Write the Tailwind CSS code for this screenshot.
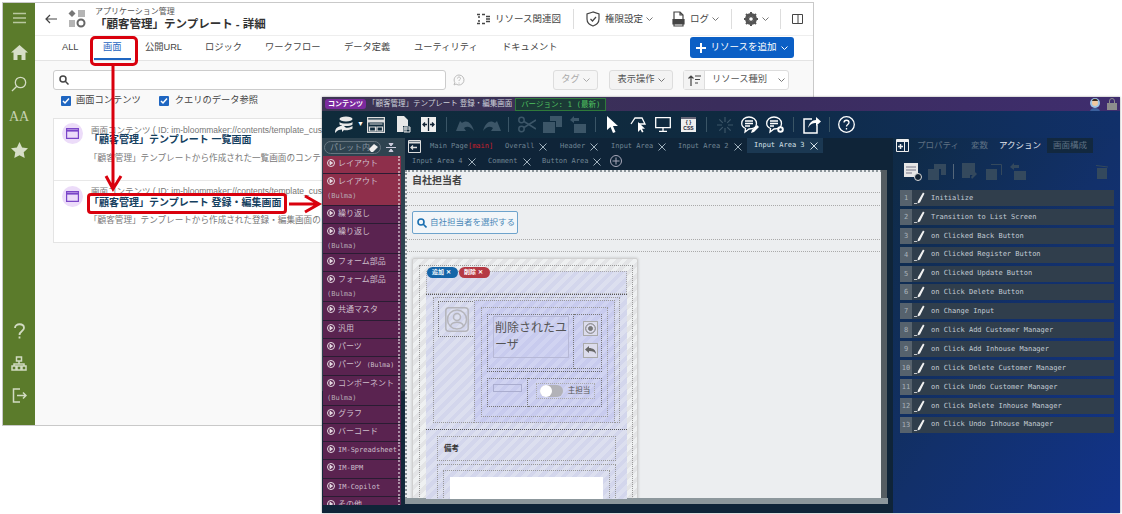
<!DOCTYPE html>
<html lang="en">
<head>
<meta charset="UTF-8">
<title>顧客管理 テンプレート</title>
<script src="https://cdn.jsdelivr.net/npm/@tailwindcss/browser@4"></script>
</head>
<body class="bg-white w-[1122px] h-[514px] overflow-hidden relative font-['Liberation_Sans','Noto_Sans_CJK_JP',sans-serif]">

<!-- back window: resource detail -->
<div class="absolute left-[2px] top-[2px] w-[812px] h-[424px] border border-[#c9c9c9] bg-[#f9f9f9] flex overflow-hidden">
  <div class="w-[32px] bg-[#5b7b2b] flex flex-col items-center shrink-0">
    <svg class="mt-[9px]" width="15" height="12" viewBox="0 0 15 12" stroke="#b9c8a0" stroke-width="1.3"><path d="M1 1.5h13M1 6h13M1 10.5h13"/></svg>
    <svg class="mt-[21px]" width="17" height="15" viewBox="0 0 17 15" fill="#d7dfc8"><path d="M8.5 0 0 7.5h2.5V15h4v-5h4v5h4V7.5H17z"/></svg>
    <svg class="mt-[16px]" width="16" height="16" viewBox="0 0 16 16" fill="none" stroke="#d2dbc2" stroke-width="1.3"><circle cx="9.5" cy="6.5" r="5.2"/><path d="M5.8 10.2 1 15"/></svg>
    <span class="mt-[17px] text-[14px] leading-[16px] text-[#c6d2b2] font-['Liberation_Serif',serif]">AA</span>
    <svg class="mt-[17px]" width="17" height="16" viewBox="0 0 17 16" fill="#d7dfc8"><path d="m8.5 0 2.6 5.4 5.9.8-4.3 4.1 1 5.7-5.2-2.8L3.3 16l1-5.7L0 6.2l5.9-.8z"/></svg>
    <svg class="mt-[165px]" width="11" height="16" viewBox="0 0 11 16" fill="none" stroke="#d2dbc2" stroke-width="1.8"><path d="M1 5c0-5 9-5 9 0 0 3-4.500 3-4.500 7M5.500 13.500v2"/></svg>
    <svg class="mt-[17px]" width="16" height="15" viewBox="0 0 16 15" fill="none" stroke="#d2dbc2" stroke-width="1.500"><path d="M5.500 1h5v4h-5zM1 10h4v4H1zM6 10h4v4H6zM11 10h4v4h-4zM8 5v3M3 10V8h10v2"/></svg>
    <svg class="mt-[17px]" width="15" height="15" viewBox="0 0 15 15" fill="none" stroke="#d2dbc2" stroke-width="1.500"><path d="M8 1H1.500v13H8M5 7.500h9M11 4.500l3 3-3 3"/></svg>
  </div>
  <div class="flex-1 min-w-0 flex flex-col">
    <div class="h-[33px] bg-white flex items-center shrink-0 border-b border-[#eee] text-[#444]">
      <svg class="ml-[10px]" width="12" height="10" viewBox="0 0 12 10" fill="none" stroke="#444" stroke-width="1.200"><path d="M12 5H1M5 1 1 5l4 4"/></svg>
      <svg class="ml-[11px]" width="18" height="18" viewBox="0 0 18 18"><path d="m4 0 3.500 3.500L4 7 .5 3.500z" fill="#777"/><path d="M10 0h7v7h-7zM1 10h6v7H1z" fill="#b5b5b5"/><circle cx="13" cy="13" r="3.500" fill="none" stroke="#666" stroke-width="2"/></svg>
      <div class="ml-[9px] flex flex-col">
        <span class="text-[8px] leading-[10px] text-[#555]">アプリケーション管理</span>
        <span class="text-[11.500px] leading-[15px] font-semibold text-[#333]">「顧客管理」テンプレート - 詳細</span>
      </div>
      <div class="ml-auto flex items-center text-[9.500px] text-[#444]">
        <svg width="13" height="12" viewBox="0 0 13 12" fill="none" stroke="#444" stroke-width="1.500"><path d="M0 1.500h3M5 1.500h3M9 3.500h4M9 6h4M9 8.500h4M0 10.500h3M5 10.500h3M2 3v2M2 7v2"/></svg>
        <span class="ml-[5px]">リソース関連図</span>
        <span class="ml-[12px] w-px h-[20px] bg-[#ddd]"></span>
        <svg class="ml-[12px]" width="14" height="16" viewBox="0 0 14 16" fill="none" stroke="#444" stroke-width="1.200"><path d="M7 1 1 3v5c0 3.500 3 6 6 7 3-1 6-3.500 6-7V3zM4.500 8l2 2 3.500-4"/></svg>
        <span class="ml-[5px]">権限設定</span>
        <svg class="ml-[3px]" width="7" height="4" viewBox="0 0 7 4" fill="none" stroke="#777"><path d="m.5.5 3 3 3-3"/></svg>
        <svg class="ml-[19px]" width="13" height="16" viewBox="0 0 13 16" fill="none" stroke="#444" stroke-width="1.200"><path d="M8 1H2v14h9V4zM8 1v3h3"/><path d="M1 8.500h11v4.500H1z" fill="#444"/></svg>
        <span class="ml-[5px]">ログ</span>
        <svg class="ml-[3px]" width="7" height="4" viewBox="0 0 7 4" fill="none" stroke="#777"><path d="m.5.5 3 3 3-3"/></svg>
        <span class="ml-[12px] w-px h-[20px] bg-[#ddd]"></span>
        <svg class="ml-[12px]" width="14" height="14" viewBox="0 0 14 14"><circle cx="7" cy="7" r="4.500" fill="none" stroke="#555" stroke-width="3"/><path d="M7 0v14M0 7h14M2 2l10 10M12 2 2 12" stroke="#555" stroke-width="2"/><circle cx="7" cy="7" r="1.800" fill="#fff"/></svg>
        <svg class="ml-[4px]" width="7" height="4" viewBox="0 0 7 4" fill="none" stroke="#777"><path d="m.5.5 3 3 3-3"/></svg>
        <span class="ml-[11px] w-px h-[20px] bg-[#ddd]"></span>
        <svg class="ml-[11px] mr-[10px]" width="11" height="10" viewBox="0 0 11 10" fill="none" stroke="#444"><path d="M.5.5h10v9H.5zM6 .5v9"/></svg>
      </div>
    </div>
    <div class="h-[25px] bg-white flex items-center relative shrink-0 border-b border-[#e4e4e4] text-[9.250px] text-[#444]">
      <span class="absolute left-[27px]">ALL</span>
      <span class="absolute left-[68px] text-[#1f66c1]">画面</span>
      <span class="absolute left-[59px] bottom-0 w-[37px] h-[2px] bg-[#1f66c1]"></span>
      <span class="absolute left-[110px]">公開URL</span>
      <span class="absolute left-[170px]">ロジック</span>
      <span class="absolute left-[230px]">ワークフロー</span>
      <span class="absolute left-[309px]">データ定義</span>
      <span class="absolute left-[379px]">ユーティリティ</span>
      <span class="absolute left-[467px]">ドキュメント</span>
      <button class="absolute left-[655px] top-[1px] w-[104px] h-[21px] rounded-[3px] bg-[#0b5fc5] text-white text-[9.500px] flex items-center justify-center gap-[4px]">
        <svg width="10" height="10" viewBox="0 0 10 10" stroke="#fff" stroke-width="2"><path d="M5 0v10M0 5h10"/></svg>
        <span>リソースを追加</span>
        <svg width="7" height="4" viewBox="0 0 7 4" fill="none" stroke="#fff"><path d="m.5.5 3 3 3-3"/></svg>
      </button>
    </div>
    <div class="flex items-center mt-[9px] ml-[18px] h-[20px] shrink-0 text-[9.250px] text-[#555]">
      <div class="w-[393px] h-[20px] bg-white border border-[#ccc] rounded-[3px] flex items-center pl-[5px]">
        <svg width="10" height="10" viewBox="0 0 10 10" fill="none" stroke="#444" stroke-width="1.500"><circle cx="4" cy="4" r="3"/><path d="m6.300 6.300 3.200 3.200"/></svg>
      </div>
      <svg class="ml-[7px]" width="12" height="12" viewBox="0 0 12 12" fill="none" stroke="#bbb"><path d="M6 1a5 5 0 1 1-3 9l-2 1 .8-2.500A5 5 0 0 1 6 1z"/><path d="M4.500 4.500c0-2 3-2 3 0 0 1-1.500 1-1.500 2.500M6 8.500v1"/></svg>
      <span class="ml-[88px] w-[45px] h-[20px] border border-[#ddd] rounded-[3px] flex items-center justify-center gap-[3px] text-[#aaa] bg-[#f6f6f6]">タグ <svg width="7" height="4" viewBox="0 0 7 4" fill="none" stroke="#aaa"><path d="m.5.5 3 3 3-3"/></svg></span>
      <span class="ml-[11px] w-[64px] h-[20px] border border-[#ddd] rounded-[3px] flex items-center justify-center gap-[3px] bg-[#f3f3f3]">表示操作 <svg width="7" height="4" viewBox="0 0 7 4" fill="none" stroke="#777"><path d="m.5.5 3 3 3-3"/></svg></span>
      <div class="ml-[10px] w-[106px] h-[20px] border border-[#ddd] rounded-[3px] flex items-center bg-white">
        <span class="w-[21px] h-full border-r border-[#ddd] flex items-center justify-center bg-[#f3f3f3]">
          <svg width="13" height="11" viewBox="0 0 13 11" fill="none" stroke="#444" stroke-width="1.200"><path d="M3 11V1M.5 3.500 3 1l2.500 2.500M7 1h6M7 4.500h5M7 8h3"/></svg>
        </span>
        <span class="ml-[7px]">リソース種別</span>
        <svg class="ml-[11px]" width="7" height="4" viewBox="0 0 7 4" fill="none" stroke="#777"><path d="m.5.5 3 3 3-3"/></svg>
      </div>
    </div>
    <div class="flex items-center mt-[5px] ml-[26px] h-[12px] text-[9.250px] text-[#444] shrink-0">
      <span class="w-[10px] h-[10px] bg-[#1f66c1] rounded-[1px] flex items-center justify-center"><svg width="8" height="8" viewBox="0 0 8 8" fill="none" stroke="#fff" stroke-width="1.500"><path d="m1 4 2 2 4-4.500"/></svg></span>
      <span class="ml-[5px]">画面コンテンツ</span>
      <span class="ml-[18px] w-[10px] h-[10px] bg-[#1f66c1] rounded-[1px] flex items-center justify-center"><svg width="8" height="8" viewBox="0 0 8 8" fill="none" stroke="#fff" stroke-width="1.500"><path d="m1 4 2 2 4-4.500"/></svg></span>
      <span class="ml-[6px]">クエリのデータ参照</span>
    </div>
    <div class="mt-[11px] ml-[18px] w-[750px] h-[125px] border border-[#e4e4e4] bg-white flex flex-col shrink-0">
      <div class="h-[62px] border-b border-[#e8e8e8] flex pl-[8px] pt-[4px]">
        <span class="w-[21px] h-[21px] rounded-full bg-[#ecdcf9] flex items-center justify-center shrink-0"><svg width="13" height="11" viewBox="0 0 13 11" fill="none" stroke="#7a45c8" stroke-width="1.200"><path d="M.6.6h11.800v9.800H.6z"/><path d="M.6 2.600h11.800" stroke-width="2"/></svg></span>
        <div class="ml-[8px] whitespace-nowrap flex flex-col items-start">
          <span class="text-[8.500px] leading-[10px] mt-[2px] text-[#777]">画面コンテンツ ( ID: im-bloommaker://contents/template_custome</span>
          <span class="-ml-[2px] text-[10px] leading-[12px] mt-[-1px] font-bold text-[#15405f]">「顧客管理」テンプレート 一覧画面</span>
          <span class="-ml-[2px] text-[8.600px] leading-[12px] mt-[6px] text-[#777]">「顧客管理」テンプレートから作成された一覧画面のコンテ</span>
        </div>
      </div>
      <div class="flex-1 flex pl-[8px] pt-[5px]">
        <span class="w-[21px] h-[21px] rounded-full bg-[#ecdcf9] flex items-center justify-center shrink-0"><svg width="13" height="11" viewBox="0 0 13 11" fill="none" stroke="#7a45c8" stroke-width="1.200"><path d="M.6.6h11.800v9.800H.6z"/><path d="M.6 2.600h11.800" stroke-width="2"/></svg></span>
        <div class="ml-[8px] whitespace-nowrap flex flex-col items-start">
          <span class="text-[8.500px] leading-[10px] text-[#777]">画面コンテンツ ( ID: im-bloommaker://contents/template_custome</span>
          <span class="-ml-[2px] text-[10px] leading-[12px] mt-[1px] font-bold text-[#15405f]">「顧客管理」テンプレート 登録・編集画面</span>
          <span class="-ml-[2px] text-[8.600px] leading-[12px] mt-[5px] text-[#777]">「顧客管理」テンプレートから作成された登録・編集画面の</span>
        </div>
      </div>
    </div>
  </div>
</div>

<!-- callouts over the back window -->
<span class="absolute left-[90px] top-[36px] w-[48px] h-[30px] border-[3px] border-[#d9000d] rounded-[5px]"></span>
<span class="absolute left-[87px] top-[193px] w-[200px] h-[21px] border-[3px] border-[#d9000d] rounded-[4px]"></span>
<svg class="absolute left-0 top-0" width="330" height="230" fill="none" stroke="#d9000d" stroke-width="3">
  <path d="M113 66v122M106 176l7 13 8-13"/>
  <path d="M289 204h30M305 196l14 8-14 8"/>
</svg>

<!-- front window: page editor -->
<div class="absolute left-[322px] top-[97px] w-[798px] h-[416px] bg-[#0f2438] flex flex-col overflow-hidden shadow-[0_0_2px_#0006]">
  <div class="h-[14px] shrink-0 flex items-center bg-linear-to-r from-[#3c3552] via-[#3a2d5c] to-[#3f2d6e] text-[7.500px]">
    <span class="ml-[3px] px-[3px] h-[10px] leading-[10px] rounded-[3px] bg-[#7b2a9e] text-white text-[7px] font-bold whitespace-nowrap">コンテンツ</span>
    <span class="ml-[2px] text-[#ccd0d8] whitespace-nowrap">「顧客管理」テンプレート 登録・編集画面</span>
    <span class="ml-[3px] w-[91px] h-[13px] border border-[#2f7a3a] bg-[#1b3a36] text-[#4fc060] text-[7.500px] leading-[11px] text-center font-['DejaVu_Sans_Mono','Noto_Sans_CJK_JP',monospace] whitespace-nowrap">バージョン: 1 (最新)</span>
    <svg class="ml-auto" width="12" height="13" viewBox="0 0 12 13"><circle cx="6" cy="5" r="5" fill="#9cc3e6"/><circle cx="6" cy="5" r="3" fill="#f0c8a0"/><path d="M3 3c1-3 5-3 6 0z" fill="#3a2a1a"/><path d="M1 13c1-4 9-4 10 0z" fill="#3b5f9c"/></svg>
    <svg class="ml-[6px] mr-[3px]" width="10" height="12" viewBox="0 0 10 12"><path d="M2.500 5V3a2.500 2.500 0 0 1 5 0v2" fill="none" stroke="#8d8d8d"/><rect y="5" width="10" height="7" fill="#8d8d8d"/></svg>
  </div>
  <div class="h-[27px] shrink-0 flex items-center bg-linear-to-r from-[#0f2b3b] via-[#0f2a40] to-[#11306a]">
    <svg class="ml-[13px]" width="18" height="18" viewBox="0 0 18 18" fill="#e8e8e8"><ellipse cx="11" cy="3" rx="6.500" ry="2.500"/><path d="M4.500 6c2 2 11 2 13 0v2.500c-2 2-11 2-13 0zM7 11.500c3 .5 8 .5 10.500-1.500v2.500c-1.500 1.200-5 2-8 1.800z"/><path d="M0 17c0-5 3-7 7-7V8l4 4-4 4v-2.500c-3 0-5 1-7 3.500z" fill="#f0f0f0"/></svg>
    <span class="ml-[4px] text-white text-[7px]">▼</span>
    <svg class="ml-[3px]" width="18" height="16" viewBox="0 0 18 16" fill="none" stroke="#ddd" stroke-width="1.200"><path d="M.6.6h16.800v14.800H.6z"/><path d="M.6 4h16.800" stroke-width="3"/><path d="M2.500 7h13M2.500 10h6v4h-6zM10 10h5.500v4H10z"/></svg>
    <svg class="ml-[11px]" width="15" height="18" viewBox="0 0 15 18" fill="#e8e8e8"><path d="M1 0h7l4 4v6H7v6H1z"/><path d="M8 11h6v5H8z" fill="none" stroke="#e8e8e8"/><path d="M8 13h6M10 11v5" stroke="#e8e8e8"/></svg>
    <svg class="ml-[10px]" width="15" height="15" viewBox="0 0 15 15"><rect width="15" height="15" fill="#eee"/><path d="M7.500 1v13M2 7.500h4M4 5.500l-2 2 2 2M13 7.500H9M11 5.500l2 2-2 2" fill="none" stroke="#123" stroke-width="1.300"/></svg>
    <span class="ml-[10px] w-px h-[15px] bg-[#3a5566]"></span>
    <svg class="ml-[9px]" width="18" height="12" viewBox="0 0 18 12" fill="#3c5668"><path d="M0 12 4 2l2 2c4-3 9-2 12 8-4-5-7-5-10-3l2 3z"/></svg>
    <svg class="ml-[9px]" width="18" height="12" viewBox="0 0 18 12" fill="#3c5668"><path d="m18 12-4-10-2 2C8 1 3 2 0 12c4-5 7-5 10-3l-2 3z"/></svg>
    <span class="ml-[7px] w-px h-[15px] bg-[#3a5566]"></span>
    <svg class="ml-[9px]" width="18" height="17" viewBox="0 0 18 17" fill="none" stroke="#3c5668" stroke-width="1.500"><circle cx="3.500" cy="4" r="2.700"/><circle cx="3.500" cy="13" r="2.700"/><path d="M6 5.500 18 13M6 11.500 18 4"/></svg>
    <svg class="ml-[7px]" width="19" height="17" viewBox="0 0 19 17" fill="#3c5668"><path d="M7 0h12v11H13V5H7z"/><path d="M0 6h12v11H0z"/></svg>
    <svg class="ml-[8px]" width="16" height="17" viewBox="0 0 16 17" fill="#3c5668"><path d="M0 4 4 0v2h5v3H4v2zM4 8h12v9H4z"/></svg>
    <span class="ml-[9px] w-px h-[15px] bg-[#3a5566]"></span>
    <svg class="ml-[10px]" width="14" height="17" viewBox="0 0 14 17" fill="#fff"><path d="M1 0v14l3.500-3 2.500 6 2.500-1-2.500-6H12z"/></svg>
    <svg class="ml-[10px]" width="17" height="16" viewBox="0 0 17 16" fill="none" stroke="#fff" stroke-width="1.300"><path d="M1 7 5 1h7l3 6H8"/><path d="M8 5v10l2.500-2.500 1.500 3 1.500-.7-1.500-3H15z" fill="#fff" stroke="none"/></svg>
    <svg class="ml-[8px]" width="16" height="15" viewBox="0 0 16 15" fill="none" stroke="#fff" stroke-width="1.300"><path d="M.7.7h14.600v10H.7zM8 11v3M4 14.300h8"/></svg>
    <span class="ml-[10px] w-[15px] h-[15px] bg-[#eee] text-[#223] text-[5px] leading-[6px] font-bold text-center border-t-2 border-[#667] whitespace-pre-line">{ }
CSS</span>
    <span class="ml-[10px] w-px h-[15px] bg-[#3a5566]"></span>
    <svg class="ml-[10px]" width="16" height="16" viewBox="0 0 16 16" stroke="#3c5668" stroke-width="1.200"><path d="M8 0v5M8 11v5M0 8h5M11 8h5M2.300 2.300l3.500 3.500M10.200 10.200l3.500 3.500M13.700 2.300l-3.500 3.500M5.800 10.200l-3.500 3.500"/></svg>
    <svg class="ml-[8px]" width="18" height="18" viewBox="0 0 18 18" fill="none" stroke="#fff" stroke-width="1.300"><path d="M8 1c4 0 7.500 2.500 7.500 6.500S12 13 8 13l-4 3 .5-3.500C2 11.500.7 9.500.7 7.500.7 3.500 4 1 8 1zM4 5h8M4 7.500h8M4 10h5"/><path d="m10 17 1-3 5-5 2 2-5 5z" fill="#fff" stroke="none"/></svg>
    <svg class="ml-[7px]" width="19" height="18" viewBox="0 0 19 18" fill="none" stroke="#fff" stroke-width="1.300"><path d="M8 1c4 0 7.500 2.500 7.500 6.500S12 13 8 13l-4 3 .5-3.500C2 11.500.7 9.500.7 7.500.7 3.500 4 1 8 1zM4 5h8M4 7.500h8M4 10h4"/><circle cx="14.500" cy="13.500" r="2.300" stroke-width="2"/></svg>
    <span class="ml-[8px] w-px h-[15px] bg-[#3a5566]"></span>
    <svg class="ml-[9px]" width="18" height="18" viewBox="0 0 18 18" fill="none" stroke="#fff" stroke-width="1.500"><path d="M9 3H1v14h13V9"/><path d="M5 12c1-5 4-8 8-8V1l5 4.500-5 4.500V7c-3 0-6 1-8 5z" fill="#fff" stroke="none"/></svg>
    <span class="ml-[8px] w-px h-[15px] bg-[#3a5566]"></span>
    <svg class="ml-[8px]" width="17" height="17" viewBox="0 0 17 17" fill="none" stroke="#fff" stroke-width="1.300"><circle cx="8.500" cy="8.500" r="7.800"/><path d="M6 6.500c0-3 5-3 5 0 0 2-2.500 2-2.500 4M8.500 12v1.500"/></svg>
  </div>
  <div class="flex-1 min-h-0 flex">
    <!-- palette -->
    <div class="w-[83px] shrink-0 flex flex-col overflow-hidden">
      <div class="h-[18px] shrink-0 flex items-center bg-[#2e4350]">
        <span class="ml-[2px] w-[57px] h-[13px] border border-[#66757f] rounded-full text-[8px] leading-[11px] pl-[5px] text-[#8796a0] relative whitespace-nowrap overflow-hidden">パレット内<svg class="absolute right-[2px] top-[2px]" width="9" height="8" viewBox="0 0 9 8" fill="#eee"><path d="M0 5 5 0l4 3-5 5H2z"/></svg></span>
        <svg class="ml-[5px]" width="10" height="11" viewBox="0 0 10 11" stroke="#ccd" fill="#ccd"><path d="M0 5.500h10"/><path d="M5 4 3 1.500h4zM5 7 3 9.500h4z"/></svg>
      </div>
      <div class="h-[349px] shrink-0 overflow-hidden bg-[linear-gradient(#2e4350_0,#2e4350_235px,#14283a_235px)]">
        <div id="palette" class="w-[78px] ml-px flex flex-col"></div>
      </div>
    </div>
    <!-- tabs and canvas -->
    <div class="w-[483px] shrink-0 flex flex-col">
      <div class="h-[32px] shrink-0 relative text-[7px] leading-[15px] font-['DejaVu_Sans_Mono',monospace] text-[#6f8494] whitespace-nowrap">
        <svg class="absolute left-[3px] top-[2px]" width="13" height="13" viewBox="0 0 13 13" fill="none" stroke="#ddd"><path d="M.5.5h12v12H.5z"/><path d="M.5 2.500h12" stroke-width="2"/><path d="M9 7.500H3M5 5.500l-2 2 2 2" stroke-width="1.300"/></svg>
        <span class="absolute left-[25px] top-[1px]">Main Page<span class="text-[#c8202c]">[main]</span></span>
        <span class="absolute left-[100px] top-[1px] flex items-center gap-[4px]">Overall <svg width="8" height="8" viewBox="0 0 8 8" stroke="#9fb0bc"><path d="m.5.5 7 7M7.500.5l-7 7"/></svg></span>
        <span class="absolute left-[155px] top-[1px] flex items-center gap-[5px]">Header <svg width="8" height="8" viewBox="0 0 8 8" stroke="#9fb0bc"><path d="m.5.5 7 7M7.500.5l-7 7"/></svg></span>
        <span class="absolute left-[206px] top-[1px] flex items-center gap-[5px]">Input Area <svg width="8" height="8" viewBox="0 0 8 8" stroke="#9fb0bc"><path d="m.5.5 7 7M7.500.5l-7 7"/></svg></span>
        <span class="absolute left-[273px] top-[1px] flex items-center gap-[5px]">Input Area 2 <svg width="8" height="8" viewBox="0 0 8 8" stroke="#9fb0bc"><path d="m.5.5 7 7M7.500.5l-7 7"/></svg></span>
        <span class="absolute left-[342px] top-0 w-[76px] h-[15px] bg-[#1b3852] text-[#d5e0e8] pl-[7px] flex items-center gap-[5px]">Input Area 3 <svg width="8" height="8" viewBox="0 0 8 8" stroke="#d5e0e8"><path d="m.5.5 7 7M7.500.5l-7 7"/></svg></span>
        <span class="absolute left-[7px] top-[16px] flex items-center gap-[5px]">Input Area 4 <svg width="8" height="8" viewBox="0 0 8 8" stroke="#9fb0bc"><path d="m.5.5 7 7M7.500.5l-7 7"/></svg></span>
        <span class="absolute left-[83px] top-[16px] flex items-center gap-[5px]">Comment <svg width="8" height="8" viewBox="0 0 8 8" stroke="#9fb0bc"><path d="m.5.5 7 7M7.500.5l-7 7"/></svg></span>
        <span class="absolute left-[137px] top-[16px] flex items-center gap-[5px]">Button Area <svg width="8" height="8" viewBox="0 0 8 8" stroke="#9fb0bc"><path d="m.5.5 7 7M7.500.5l-7 7"/></svg></span>
        <svg class="absolute left-[205px] top-[17px]" width="12" height="12" viewBox="0 0 12 12" fill="none" stroke="#aab"><circle cx="6" cy="6" r="5.500"/><path d="M6 2.500v7M2.500 6h7"/></svg>
      </div>
      <div class="flex-1 min-h-0 flex flex-col">
        <div class="h-[329px] flex shrink-0">
          <div class="w-[477px] bg-[#eceef0] border-l-2 border-t-2 border-dotted border-[#8b9499] overflow-hidden text-[#444]">
            <div class="h-[21px] border-b border-dotted border-[#aaa] pl-[5px] text-[10px] leading-[17px] font-bold">自社担当者</div>
            <div class="h-[13px] border-b border-dotted border-[#aaa]"></div>
            <div class="h-[34px] border-b border-dotted border-[#aaa] pt-[5px] pl-[5px]">
              <span class="w-[106px] h-[23px] border border-[#6da3cc] rounded-[2px] bg-[#f2f6f9] flex items-center pl-[4px] text-[8.500px] text-[#4a88b8] gap-[3px]">
                <svg width="10" height="10" viewBox="0 0 10 10" fill="none" stroke="#1a6fb0" stroke-width="1.600"><circle cx="4" cy="4" r="3"/><path d="m6.300 6.300 3.200 3.200"/></svg>
                自社担当者を選択する
              </span>
            </div>
            <div class="h-[12px] border-b border-dotted border-[#aaa]"></div>
            <!-- repeating card -->
            <div class="mt-[6px] ml-[5px] w-[226px] h-[260px] p-[6px] border border-[#d0d0d0] rounded-[2px] shadow-[0_0_3px_#0003] bg-[repeating-linear-gradient(135deg,#e3e4e6_0,#e3e4e6_4px,#eef0f1_4px,#eef0f1_8px)]">
              <div class="relative w-[214px] h-full border border-dotted border-[#999] px-[6px] pt-[5px]">
                <span class="absolute left-[7px] top-[1px] w-[31px] h-[11px] rounded-full bg-[#1565a8] text-white text-[6px] leading-[11px] pl-[5px] font-bold">追加 ✕</span>
                <span class="absolute left-[39px] top-[1px] w-[31px] h-[11px] rounded-full bg-[#b53a45] text-white text-[6px] leading-[11px] pl-[5px] font-bold">削除 ✕</span>
                <div class="w-[201px] h-[23px] border border-dotted border-[#aaa] bg-[repeating-linear-gradient(135deg,#d3d6ec_0,#d3d6ec_4px,#dcdfef_4px,#dcdfef_8px)]"></div>
                <div class="w-[201px] h-[135px] border-t border-dotted border-[#555] px-[7px] pt-[2px] bg-[repeating-linear-gradient(135deg,#d3d6ec_0,#d3d6ec_4px,#dcdfef_4px,#dcdfef_8px)]">
                  <div class="flex h-[126px] border border-dotted border-[#999]">
                    <div class="w-[40px] pl-[4px] pt-[3px] shrink-0">
                      <div class="w-[37px] h-[36px] border border-dotted border-[#777] flex items-center justify-center">
                        <svg width="24" height="25" viewBox="0 0 24 25" fill="none" stroke="#b5b5bb" stroke-width="1.500"><rect x=".8" y=".8" width="22.400" height="23.400" rx="3"/><circle cx="12" cy="12.500" r="9.500"/><circle cx="12" cy="10" r="3.500"/><path d="M5.500 19c2-5 11-5 13 0"/></svg>
                      </div>
                    </div>
                    <div class="w-[141px] h-[123px] mt-[2px] p-[6px] border border-dotted border-[#999] bg-[repeating-linear-gradient(135deg,#c8cbee_0,#c8cbee_4px,#d0d3f1_4px,#d0d3f1_8px)]">
                      <div class="h-[110px] border border-dotted border-[#999] px-[5px] flex flex-col">
                        <div class="h-[61px] pt-[6px] flex shrink-0">
                          <div class="w-[87px] h-[55px] border border-dotted border-[#777] px-[5px] pt-[1px]">
                            <div class="w-[76px] h-[42px] border border-[#b6b8d6] text-[12px] leading-[17px] text-[#555] pl-px pt-[3px]">削除されたユーザ</div>
                          </div>
                          <div class="w-[29px] h-[55px] border-y border-r border-dotted border-[#777] flex flex-col items-center gap-[7px] pt-[6px] pl-[5px]">
                            <span class="w-[15px] h-[15px] border border-[#aaa] bg-[#dcdcec] flex items-center justify-center"><svg width="11" height="11" viewBox="0 0 11 11" fill="none" stroke="#777"><circle cx="5.500" cy="5.500" r="4.800"/><circle cx="5.500" cy="5.500" r="2" fill="#777"/></svg></span>
                            <span class="w-[15px] h-[15px] border border-[#aaa] bg-[#dcdcec] flex items-center justify-center"><svg width="11" height="10" viewBox="0 0 11 10" fill="#666"><path d="M0 3.500 4 0v2c4 0 7 2 7 6-1-2-3-3-7-3v2z"/></svg></span>
                          </div>
                        </div>
                        <div class="h-[37px] border-t border-dotted border-[#666] mt-[2px] pt-[6px] flex">
                          <div class="w-[41px] h-[29px] border border-dotted border-[#777] pl-[5px] pt-[5px]"><div class="w-[29px] h-[8px] border border-[#aaadcf]"></div></div>
                          <div class="w-[75px] h-[29px] border-y border-r border-dotted border-[#777] pl-[8px] pt-[4px]">
                            <div class="w-[59px] h-[16px] border border-dotted border-[#aaa] flex items-center pl-[3px]">
                              <span class="w-[23px] h-[12px] rounded-full bg-[#b2b2b8] relative shrink-0"><span class="absolute left-0 top-0 w-[12px] h-[12px] rounded-full bg-white"></span></span>
                              <span class="ml-[5px] text-[7.500px] text-[#555] whitespace-nowrap">主担当</span>
                            </div>
                          </div>
                        </div>
                      </div>
                    </div>
                  </div>
                </div>
                <div class="w-[201px] h-[80px] border-t border-dotted border-[#555] px-[11px] pt-[6px] bg-[repeating-linear-gradient(135deg,#d3d6ec_0,#d3d6ec_4px,#dcdfef_4px,#dcdfef_8px)]">
                  <div class="h-[25px] border border-dotted border-[#999] pl-[6px] text-[7.500px] leading-[23px] font-bold text-[#333]">備考</div>
                  <div class="mt-[3px] h-[60px] border border-dotted border-[#999] px-[5px] pt-[5px]">
                    <div class="h-[50px] border border-dotted border-[#999] p-[6px]"><div class="h-[40px] bg-white"></div></div>
                  </div>
                </div>
              </div>
            </div>
          </div>
          <div class="w-[6px] ml-[-1px] bg-[#555d62]"></div>
        </div>
        <div class="h-[6px] shrink-0 bg-[#8c979c] -mt-[1px]"></div>
      </div>
    </div>
    <!-- properties -->
    <div class="flex-1 min-w-0 ml-[5px] bg-linear-to-br from-[#0f2a44] via-[#12306a] to-[#12338a] relative">
      <div class="h-[15px] flex items-center text-[8.500px] text-[#5f7183] whitespace-nowrap">
        <svg class="ml-[3px]" width="13" height="13" viewBox="0 0 13 13" fill="none" stroke="#eee"><path d="M.5.5h12v12H.5zM8.500 3v9.500"/><path d="M.5 2h12" stroke-width="2"/><path d="M2 7.500h5M4.500 5v5" stroke-width="1.500"/></svg>
        <span class="ml-[8px]">プロパティ</span>
        <span class="ml-[12px]">変数</span>
        <span class="ml-[11px] text-[#e4e8ee]">アクション</span>
        <span class="ml-[6px] px-[6px] h-[15px] leading-[15px] bg-[#12283f]">画面構成</span>
      </div>
      <div class="h-[37px] flex items-center">
        <svg class="ml-[11px]" width="18" height="18" viewBox="0 0 18 18"><rect width="14" height="14" fill="#e6e6e6"/><path d="M2 4h10M2 7h10M2 10h6" stroke="#778"/><circle cx="14" cy="14" r="3.500" fill="#123" stroke="#ddd"/></svg>
        <svg class="ml-[6px]" width="18" height="16" viewBox="0 0 18 16" fill="#34495d"><path d="M6 0h12v11h-5V5H6z"/><path d="M0 5h11v11H0z"/></svg>
        <span class="ml-[7px] w-px h-[15px] bg-[#55677a]"></span>
        <svg class="ml-[8px]" width="16" height="17" viewBox="0 0 16 17" fill="#34495d"><path d="M0 0h13v12H8v3H0z"/><path d="m10 16 5-5-2-2-4 5z"/></svg>
        <svg class="ml-[8px]" width="16" height="16" viewBox="0 0 16 16" fill="#34495d"><path d="M0 5h11v11H0z"/><path d="M5 .5h10.500V11" fill="none" stroke="#34495d"/></svg>
        <svg class="ml-[8px]" width="16" height="17" viewBox="0 0 16 17" fill="#34495d"><path d="M0 4 4 0v2h5v3H4v2zM4 8h12v9H4z"/></svg>
        <svg class="ml-[70px]" width="12" height="15" viewBox="0 0 12 15" fill="#34495d"><path d="M1 4h10v11H1zM0 1l12 1.500V3.500L0 2z"/></svg>
      </div>
      <div id="actions" class="ml-[7px] w-[214px] flex flex-col gap-[2.900px]"></div>
    </div>
  </div>
</div>

<script>
  // palette rows, top to bottom
  const red = "bg-[#8e2f4b]";
  const purple = "bg-[#5a2350]";
  const single = "h-[18.300px]";
  const double = "h-[30px]";
  const palette = [
    ["レイアウト", "", red, single], ["レイアウト", "(Bulma)", red, "h-[31.500px]"], ["繰り返し", "", purple, single], ["繰り返し", "(Bulma)", purple, double],
    ["フォーム部品", "", purple, single], ["フォーム部品", "(Bulma)", purple, double], ["共通マスタ", "", purple, single], ["汎用", "", purple, single],
    ["パーツ", "", purple, single], [`パーツ <span class="text-[6.500px]">(Bulma)</span>`, "", purple, single], ["コンポーネント", "(Bulma)", purple, double], ["グラフ", "", purple, single],
    ["バーコード", "", purple, single], [`<span class="text-[7px]">IM-Spreadsheet</span>`, "", purple, single], [`<span class="text-[7px]">IM-BPM</span>`, "", purple, single], [`<span class="text-[7px]">IM-Copilot</span>`, "", purple, single], ["その他", "", purple, single]
  ];
  document.getElementById("palette").innerHTML = palette.map(([label, sub, bg, height]) => `
    <div class="${bg} ${height} shrink-0 border-b border-[#2a1c33] pl-[4px] text-[#cdbfcb] text-[8px] leading-[16px] whitespace-nowrap relative overflow-hidden font-['DejaVu_Sans_Mono','Noto_Sans_CJK_JP',monospace]">
      <span class="absolute right-[1px] top-0 bottom-0 border-r-2 border-dotted border-white/50"></span>
      <svg class="inline-block mr-[3px] align-[-1px]" width="8" height="8" viewBox="0 0 8 8" fill="none" stroke="#e6dbe3"><circle cx="4" cy="4" r="3.500"/><path d="M3 2.300 5.600 4 3 5.700z" fill="#e6dbe3"/></svg>${label}
      ${sub ? `<div class="text-[7px] leading-[13px] text-[#b8aab6]">${sub}</div>` : ""}
    </div>`).join("");

  const actions = ["Initialize", "Transition to List Screen", "on Clicked Back Button", "on Clicked Register Button",
    "on Clicked Update Button", "on Click Delete Button", "on Change Input", "on Click Add Customer Manager",
    "on Click Add Inhouse Manager", "on Click Delete Customer Manager", "on Click Undo Customer Manager",
    "on Click Delete Inhouse Manager", "on Click Undo Inhouse Manager"];
  document.getElementById("actions").innerHTML = actions.map((name, i) => `
    <div class="h-[16px] bg-[#303e4c] flex items-center text-[7px] text-[#c3ccd4] whitespace-nowrap font-['DejaVu_Sans_Mono',monospace]">
      <span class="w-[12px] h-full bg-[#56626d] text-[#a9b3bb] text-center leading-[16px]">${i + 1}</span>
      <svg class="ml-[2px]" width="11" height="12" viewBox="0 0 11 12" fill="#f2f2f2"><path d="M4 9 9 .5l1.500 1L6 10.500 3.500 11.500zM0 11.300h3v.7H0z"/></svg>
      <span class="ml-[6px]">${name}</span>
    </div>`).join("");
</script>
</body>
</html>
